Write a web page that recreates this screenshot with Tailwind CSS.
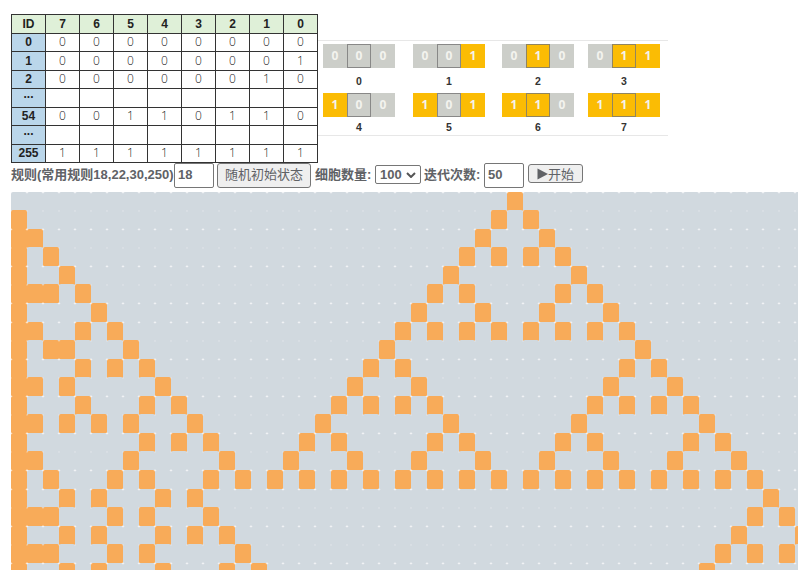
<!DOCTYPE html>
<html lang="zh">
<head>
<meta charset="utf-8">
<title>元胞自动机</title>
<script src="https://cdn.jsdelivr.net/npm/@tailwindcss/browser@4"></script>
</head>
<body class="h-[570px] w-[798px] overflow-hidden bg-white pl-[11px] pt-[13px] font-['Liberation_Sans','Noto_Sans_CJK_SC',sans-serif] text-[#606266]">
  <div class="flex h-[150px]">
    <table class="mt-[1px] h-[149px] w-[307px] shrink-0 table-fixed border-collapse text-center text-[12px] leading-none text-[#222]">
      <tbody id="rules"></tbody>
    </table>
    <div class="mt-[27px] h-[96px] w-[350px] border-y border-[#e7e7e7] pl-[5px] pt-[3px]">
      <div id="patterns" class="grid grid-cols-[90px_89px_86px_73px] grid-rows-[49px_46px]"></div>
    </div>
  </div>
  <div class="flex h-[29px] text-[13px] font-bold leading-[15px]">
    <span class="mt-1 w-[163px] shrink-0 whitespace-nowrap">规则(常用规则18,22,30,250)</span>
    <input value="18" class="h-[25px] w-[40px] shrink-0 rounded-[2px] border border-[#767676] px-[3px] pb-[3px] text-[13px] font-bold">
    <button class="ml-[3px] h-[25px] w-[94px] shrink-0 rounded-[3px] border border-[#767676] bg-[#efefef] pb-[2px] text-[13px] font-normal leading-[20px]">随机初始状态</button>
    <span class="ml-[4px] mt-1 w-[60px] shrink-0 whitespace-nowrap">细胞数量:</span>
    <div class="mt-[2px] flex h-[19px] w-[46px] shrink-0 items-center justify-between rounded-[2px] border border-[#767676] px-1">
      <span>100</span>
      <svg class="h-[6px] w-[10px]" viewBox="0 0 10 6" fill="none" stroke="#555" stroke-width="2"><path d="M1 1l4 4 4-4"/></svg>
    </div>
    <span class="ml-[3px] mt-1 w-[60px] shrink-0 whitespace-nowrap">迭代次数:</span>
    <input value="50" class="h-[25px] w-[40px] shrink-0 rounded-[2px] border border-[#767676] px-[3px] pb-[3px] text-[13px] font-bold">
    <button class="ml-[4px] mt-[1px] flex h-[19px] w-[55px] shrink-0 items-center justify-center rounded-[3px] border border-[#767676] bg-[#efefef] text-[13px] font-normal">
      <svg class="h-[12px] w-[11px]" viewBox="0 0 11 12" fill="#606266"><path d="M0.5 0.5L11 6 0.5 11.5z"/></svg><span class="pt-[2px]">开始</span>
    </button>
  </div>
  <div id="grid" class="h-[378px] w-[787px] overflow-hidden"></div>
  <script>
    const header = ['ID', 7, 6, 5, 4, 3, 2, 1, 0];
    const data = [['0', '00000000'], ['1', '00000001'], ['2', '00000010'], ['...', '        '], ['54', '00110110'], ['...', '        '], ['255', '11111111']];
    const td = 'border border-[#333] p-0';
    document.getElementById('rules').innerHTML =
      '<tr class="font-bold">' + header.map(h => `<td class="${td} bg-[#dff0d8]">${h}</td>`).join('') + '</tr>' +
      data.map(([id, bits]) => `<tr><td class="${td} bg-[#bad6ea] font-bold">${id === '...' ? '<span class="relative -top-[4px]">...</span>' : id}</td>` +
        [...bits].map(b => `<td class="${td} font-['Open_Sans',sans-serif] font-light">${b}</td>`).join('') + '</tr>').join('');

    document.getElementById('patterns').innerHTML = [0, 1, 2, 3, 4, 5, 6, 7].map(n => {
      const cells = [n >> 2 & 1, n >> 1 & 1, n & 1].map((b, i) =>
        `<span class="flex w-[24px] items-center justify-center ${b ? 'bg-[#fbbc04]' : 'bg-[#cccec9]'} ${i === 1 ? 'outline outline-1 -outline-offset-1 outline-[#777]/80' : ''}">${b}</span>`).join('');
      return `<div class="w-[72px]"><div class="flex h-[24px] font-['Open_Sans',sans-serif] text-[12px] font-bold text-[#f3f3ee]">${cells}</div>` +
        `<div class="text-center text-[10.5px] font-bold text-[#333] ${n < 4 ? 'mt-[6px]' : 'mt-[3px]'} leading-[15px]">${n}</div></div>`;
    }).join('');

    // Rule 18: a cell is born when it is empty and exactly one neighbour is set.
    let row = Array(100).fill(0);
    row[31] = 1;
    const rowTop = i => Math.round(191.72 + 18.55 * i);
    let html = '';
    for (let r = 0; r < 21; r++) {
      html += `<div class="flex items-start" style="height:${rowTop(r + 1) - rowTop(r)}px">` +
        row.map(c => `<span class="h-[19px] w-4 shrink-0 rounded-t-[2px] rounded-b-[1px] ${c ? 'bg-[#f8ab59]' : 'bg-[#d1d9df]'}"></span>`).join('') + '</div>';
      row = row.map((c, i) => i === 0 ? 1 : (!c && (row[i - 1] ^ (row[i + 1] || 0)) ? 1 : 0));
    }
    document.getElementById('grid').innerHTML = html;
  </script>
</body>
</html>
